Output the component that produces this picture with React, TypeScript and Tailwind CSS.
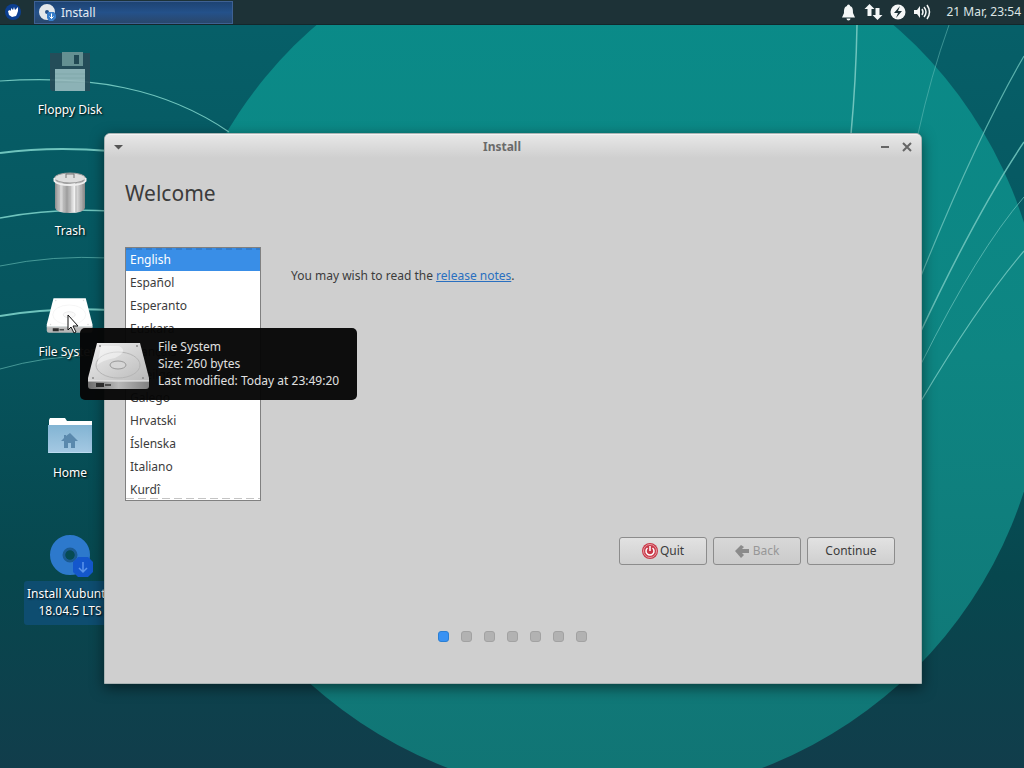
import { useState } from 'react';

const languages = ['English', 'Español', 'Esperanto', 'Euskara', 'Français', 'Gaeilge', 'Galego', 'Hrvatski', 'Íslenska', 'Italiano', 'Kurdî'];

function Wallpaper() {
  return (
    <svg className="absolute inset-0 h-full w-full" viewBox="0 0 1024 768" preserveAspectRatio="xMidYMid slice" aria-hidden="true">
      <defs>
        <linearGradient id="sky" x1="0" y1="0" x2="0" y2="1">
          <stop offset="0" stopColor="#066069" />
          <stop offset="0.45" stopColor="#06545d" />
          <stop offset="0.75" stopColor="#07474e" />
          <stop offset="1" stopColor="#113d4b" />
        </linearGradient>
        <linearGradient id="disc" x1="0" y1="0" x2="0" y2="1">
          <stop offset="0" stopColor="#098c8a" />
          <stop offset="0.5" stopColor="#0e8582" />
          <stop offset="1" stopColor="#117474" />
        </linearGradient>
      </defs>
      <rect width="1024" height="768" fill="url(#sky)" />
      <circle cx="605" cy="357" r="440" fill="url(#disc)" />
      <g fill="none" stroke="#6fc4bd">
        <path d="M0 81 C90 75 165 88 229 132" strokeWidth="1.2" />
        <path d="M0 153 Q52 146 110 151" strokeWidth="2" />
        <path d="M0 218 Q52 208 110 211" strokeWidth="1.4" />
        <path d="M0 266 Q52 255 110 258" strokeWidth="1" opacity="0.6" />
        <path d="M0 316 Q52 307 110 310" strokeWidth="2" />
        <path d="M0 369 Q45 356 90 356" strokeWidth="1" opacity="0.6" />
        <path d="M857 25 Q856 80 851 134" strokeWidth="1.5" />
        <path d="M949 25 Q931 75 918 134" strokeWidth="1" opacity="0.5" />
        <path d="M1024 56 Q978 135 921 276" strokeWidth="1.2" opacity="0.8" />
        <path d="M1024 142 Q978 210 921 331" strokeWidth="1.5" opacity="0.9" />
        <path d="M1024 197 Q978 250 921 364" strokeWidth="1" opacity="0.7" />
        <path d="M1024 251 Q978 305 921 401" strokeWidth="1.2" opacity="0.9" />
      </g>
    </svg>
  );
}

function FloppyIcon() {
  return (
    <svg width="48" height="48" viewBox="0 0 48 48" opacity="0.9" aria-hidden="true">
      <path d="M4 5h40v38H6l-2-2z" fill="#284c58" />
      <path d="M16 4h21v14H16z" fill="#6f9697" />
      <path d="M28 7h5v9h-5z" fill="#244752" />
      <path d="M9 21h30v22H9z" fill="#9bbcbf" />
      <path d="M9 26h30M9 30h30M9 34h30" stroke="#8db0b3" />
    </svg>
  );
}

function TrashIcon() {
  return (
    <svg width="48" height="48" viewBox="0 0 48 48" aria-hidden="true">
      <defs>
        <linearGradient id="can">
          <stop offset="0" stopColor="#8b8b8b" />
          <stop offset="0.2" stopColor="#dadada" />
          <stop offset="0.4" stopColor="#9c9c9c" />
          <stop offset="0.65" stopColor="#f2f2f2" />
          <stop offset="1" stopColor="#858585" />
        </linearGradient>
      </defs>
      <path d="M9 10v29q1 5 15 5t15-5V10z" fill="url(#can)" />
      <path d="M13 14v27M18 14v29M24 14v29M30 14v29M35 14v27" stroke="#b1b1b1" />
      <ellipse cx="24" cy="9" rx="15.5" ry="5" fill="#dedede" stroke="#9b9b9b" />
      <path d="M8.500 9v3q3 4 15.500 4t15.500-4V9" fill="none" stroke="#eeeeee" strokeWidth="2" />
      <path d="M20 9V5h8v4" fill="none" stroke="#777" />
    </svg>
  );
}

function DriveIcon({ size, bright }: { size: number; bright?: boolean }) {
  return (
    <svg width={size} height={size} viewBox="0 -3 64 64" aria-hidden="true">
      <defs>
        <linearGradient id="metal" x1="0" y1="0" x2="1" y2="1">
          <stop offset="0" stopColor="#f0f0f0" />
          <stop offset="1" stopColor="#b9b9b9" />
        </linearGradient>
        <linearGradient id="metalEdge">
          <stop offset="0" stopColor="#6d6d6d" />
          <stop offset="0.5" stopColor="#b8b8b8" />
          <stop offset="1" stopColor="#808080" />
        </linearGradient>
      </defs>
      <path d="M10 8h43l9 35v3H1v-3z" fill={bright ? '#ffffff' : 'url(#metal)'} />
      <ellipse cx="31" cy="30" rx="22" ry="13" fill="none" stroke={bright ? '#f3f3f3' : '#b5b5b5'} />
      {!bright && <path d="M14 11h18q10 5-4 12-12 2-18 7z" fill="#ffffff" opacity="0.45" />}
      <ellipse cx="31" cy="30" rx="8" ry="4" fill={bright ? '#fafafa' : '#d6d6d6'} stroke={bright ? '#e5e5e5' : '#999999'} />
      <path d="M1 46h61v5q0 3-3 3H4q-3 0-3-3z" fill={bright ? '#b8b8b8' : 'url(#metalEdge)'} />
      <path d="M1 46h61" stroke="#eeeeee" />
      <path d="M9 48h8v4H9z" fill="#2c2c2c" />
      <path d="M18 50h6" stroke="#4c4c4c" strokeWidth="2" />
      <g fill={bright ? '#dddddd' : '#888888'}>
        <circle cx="13" cy="11" r="1" />
        <circle cx="50" cy="11" r="1" />
        <circle cx="6" cy="43" r="1" />
        <circle cx="56" cy="43" r="1" />
      </g>
    </svg>
  );
}

function HomeIcon() {
  return (
    <svg width="48" height="48" viewBox="0 -4 48 48" aria-hidden="true">
      <defs>
        <linearGradient id="folder" x1="0" y1="0" x2="0" y2="1">
          <stop offset="0" stopColor="#82b4d3" />
          <stop offset="1" stopColor="#a5c9e3" />
        </linearGradient>
      </defs>
      <path d="M3 14V5l1-2h15l2 3h25v8z" fill="#ffffff" />
      <path d="M2 10h44v28H2z" fill="url(#folder)" />
      <path d="M2.500 37.500h43" stroke="#bddcf0" />
      <path d="M24 18l8 8h-3v7h-4v-5h-3v5h-4v-7h-3l3-3v-3h2v1z" fill="#5a89ad" />
    </svg>
  );
}

function DiscIcon() {
  return (
    <svg width="48" height="48" viewBox="0 1 48 48" aria-hidden="true">
      <circle cx="24" cy="24" r="13" fill="none" stroke="#2d79cc" strokeWidth="14" />
      <circle cx="24" cy="24" r="6" fill="none" stroke="#1b5b92" strokeWidth="3" />
      <circle cx="24" cy="24" r="4.500" fill="#064b54" />
      <path d="M32 26h10l5 5v10l-5 5H32l-5-5V31z" fill="#1457cc" />
      <path d="M37 31v10m-4-4l4 4 4-4" stroke="#5b95ec" strokeWidth="1.500" fill="none" />
    </svg>
  );
}

function Panel() {
  return (
    <header className="relative flex h-[25px] items-center justify-between border-b border-[#13272b] bg-[#1d3237] text-[12px] text-[#dce5e5]">
      <div className="flex h-full items-center">
        <button aria-label="Applications" className="flex w-[34px] pl-[5px]">
          <svg width="16" height="16" viewBox="0 0 16 16">
            <circle cx="8" cy="8" r="8" fill="#0c3f91" />
            <path d="M3 7l2-1 1 1V4l2 2 1-3 1 3 3-3 0 4-1 3-1 2-4 1-3-2z" fill="#ffffff" />
          </svg>
        </button>
        <button className="flex h-[23px] w-[199px] items-center gap-[5px] border border-[#3e6193] bg-linear-to-b from-[#1d4373] via-[#24518a] to-[#29476c] pl-1 leading-[21px] text-[#e5ebf2]">
          <svg width="17" height="17" viewBox="0 0 17 17" aria-hidden="true">
            <circle cx="8" cy="8" r="5" fill="none" stroke="#e3e7eb" strokeWidth="6" />
            <path d="M9 8h6l2 3v3l-3 3h-4l-2-3v-4z" fill="#377dca" />
            <path d="M12.500 9.500v5m-2-2l2 2 2-2" stroke="#ffffff" fill="none" />
          </svg>
          <span className="pt-px">Install</span>
        </button>
      </div>
      <div className="flex items-center pr-[3px]">
        <svg width="96" height="20" viewBox="0 0 96 20" fill="#f4f7f7" aria-hidden="true">
          <path d="M8.500 2.500c-1 0-1.500 1-1.500 1.500-3 1-3 4-3 7l-2 4.500h13L13 11c0-3 0-6-3-7 0-.5-.5-1.500-1.500-1.500zM6.500 16.500h4q0 2-2 2t-2-2z" />
          <path d="M30 2l5 5h-3v7h-4V7h-3zM38 18l-5-5h3V6h4v7h3z" transform="translate(-.5 0)" />
          <circle cx="58" cy="10" r="7.500" />
          <path d="M60 4l-6 7h4l-2 5 6-7h-4z" fill="#1d3237" />
          <path d="M74 8h3l3-4v12l-3-4h-3z" />
          <path d="M82 7q2 3 0 6m2-8q4 5 0 10m3-12q5 7 0 14" fill="none" stroke="#f4f7f7" strokeWidth="1.500" />
        </svg>
        <time className="ml-[10px]">21 Mar, 23:54</time>
      </div>
    </header>
  );
}

const shortcuts = [
  { name: 'Floppy Disk', icon: <FloppyIcon /> },
  { name: 'Trash', icon: <TrashIcon /> },
  { name: 'File System', icon: <DriveIcon size={48} bright /> },
  { name: 'Home', icon: <HomeIcon /> },
  { name: 'Install Xubuntu 18.04.5 LTS', icon: <DiscIcon />, selected: true },
];

function DesktopIcons() {
  return (
    <nav className="absolute top-[48px] left-[24px] flex w-[92px] flex-col">
      {shortcuts.map((item) => (
        <button key={item.name} className="flex h-[121px] flex-col items-center text-[12px] leading-[17px] text-white text-shadow-[1px_1px_2px_#000]">
          {item.icon}
          <span className={item.selected ? 'mt-px w-full rounded-[3px] bg-[#0e4d70] px-[2px] pt-1 pb-[6px]' : 'mt-px py-1'}>{item.name}</span>
        </button>
      ))}
    </nav>
  );
}

function InstallWindow() {
  const [selected, setSelected] = useState('English');

  return (
    <main className="absolute top-[133px] left-[104px] flex w-[818px] flex-col rounded-t-[6px] border border-[#aab4b4] bg-[#cfcfcf] text-[12px] text-[#3c3c3c] shadow-[0_4px_14px_rgba(0,0,0,0.5)]">
      <div className="flex h-[24px] items-center justify-between rounded-t-[5px] border-t border-[#f3f3f3] bg-linear-to-b from-[#e7e7e7] to-[#cfcfcf] px-[9px]">
        <button aria-label="Window menu" className="w-[10px]">
          <svg width="10" height="6" viewBox="0 0 10 6"><path d="M0 1h9L4.500 5.500z" fill="#555555" /></svg>
        </button>
        <h1 className="text-[12px] font-bold text-[#6a6a6a]">Install</h1>
        <div className="flex items-center gap-[12px]">
          <button aria-label="Minimize">
            <svg width="10" height="10" viewBox="0 0 10 10"><path d="M1 5h8" stroke="#666666" strokeWidth="2" /></svg>
          </button>
          <button aria-label="Close">
            <svg width="10" height="10" viewBox="0 0 10 10"><path d="M1 1l8 8M9 1L1 9" stroke="#666666" strokeWidth="2" /></svg>
          </button>
        </div>
      </div>
      <div className="flex flex-col px-[20px] pt-[20px] pb-[41px]">
        <h2 className="text-[21px] leading-[30px]">Welcome</h2>
        <div className="mt-[39px] flex items-start gap-[30px]">
          <ul role="listbox" aria-label="Language" className="relative h-[254px] w-[136px] overflow-hidden border border-[#808080] bg-white">
            {languages.map((language) => (
              <li key={language} role="option" aria-selected={selected === language}>
                <button
                  onClick={() => setSelected(language)}
                  className={`block h-[23px] w-full px-1 text-left ${selected === language ? 'bg-[#398ee7] text-white' : ''}`}
                >
                  {language}
                </button>
              </li>
            ))}
            {/* focus ring of the list */}
            <svg className="pointer-events-none absolute inset-0 h-full w-full" aria-hidden="true">
              <line x1="0" y1="1" x2="100%" y2="1" stroke="#2f6db3" strokeDasharray="6 4" />
              <line x1="0" y1="250.500" x2="100%" y2="250.500" stroke="#c4c4c4" strokeDasharray="8 4" />
            </svg>
          </ul>
          <p className="mt-[20px] leading-[18px]">
            You may wish to read the <a href="#release-notes" className="text-[#2a6fc0] underline">release notes</a>.
          </p>
        </div>
        <div className="mt-[36px] mr-[6px] flex justify-end gap-[6px]">
          <button className="flex h-[28px] w-[88px] items-center justify-center gap-[2px] rounded-[3px] border border-[#8c8c8c] bg-linear-to-b from-[#e2e2e2] to-[#cfcfcf]">
            <svg width="16" height="16" viewBox="0 0 16 16" aria-hidden="true">
              <circle cx="8" cy="8" r="8" fill="#c83848" />
              <circle cx="8" cy="8" r="6.500" fill="none" stroke="#e79aa2" />
              <path d="M5.500 5a4 4 0 1 0 5 0M8 3v5" fill="none" stroke="#ffffff" strokeWidth="1.500" />
            </svg>
            Quit
          </button>
          <button disabled className="flex h-[28px] w-[88px] items-center justify-center gap-1 rounded-[3px] border border-[#8c8c8c] bg-linear-to-b from-[#d8d8d8] to-[#cbcbcb] text-[#979797]">
            <svg width="14" height="14" viewBox="0 0 14 14" aria-hidden="true"><path d="M0 7l6-6 3 2-2 2h7v4H7l2 2-3 3z" fill="#8b8b8b" /></svg>
            Back
          </button>
          <button className="h-[28px] w-[88px] rounded-[3px] border border-[#8c8c8c] bg-linear-to-b from-[#e2e2e2] to-[#cfcfcf]">Continue</button>
        </div>
        <div className="mt-[66px] mr-[2px] flex justify-center gap-[12px]" aria-hidden="true">
          {languages.slice(0, 7).map((language, index) => (
            <span key={language} className={`h-[11px] w-[11px] rounded-[3px] border ${index === 0 ? 'border-[#2b7fd3] bg-[#3992f3]' : 'border-[#a2a2a2] bg-[#b2b2b2]'}`} />
          ))}
        </div>
      </div>
    </main>
  );
}

function FileTooltip() {
  return (
    <div role="tooltip" className="absolute top-[328px] left-[80px] flex h-[72px] w-[277px] items-center gap-[7px] rounded-[5px] bg-[#060606]/97 pl-[7px] text-[12px] leading-[17px] text-[#e0e0e0]">
      <DriveIcon size={64} />
      <div className="pb-[2px]">
        <p>File System</p>
        <p>Size: 260 bytes</p>
        <p>Last modified: Today at 23:49:20</p>
      </div>
    </div>
  );
}

export default function App() {
  return (
    <div className="relative min-h-screen overflow-hidden bg-[#07545d] font-['Noto_Sans',sans-serif]">
      <Wallpaper />
      <Panel />
      <DesktopIcons />
      <InstallWindow />
      <FileTooltip />
      <svg className="pointer-events-none absolute top-[314px] left-[67px]" width="13" height="20" viewBox="0 0 13 20" aria-hidden="true">
        <path d="M1 1v15l3-3 3 6 2-1-3-6h5z" fill="#ffffff" stroke="#111111" />
      </svg>
    </div>
  );
}
